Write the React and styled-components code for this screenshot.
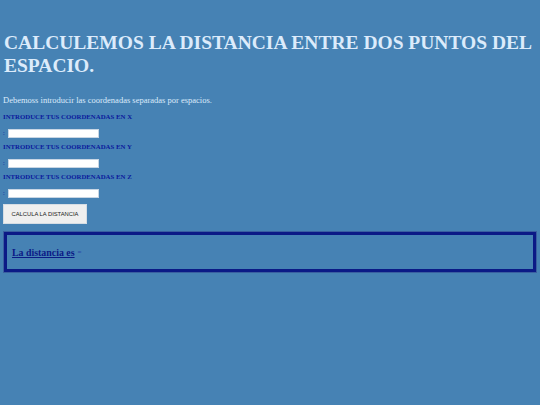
import React, { useState } from "react";
import styled, { createGlobalStyle } from "styled-components";

const GlobalStyle = createGlobalStyle`
  html, body {
    margin: 0;
    padding: 0;
    background: #4682b4;
  }
  body {
    font-family: "Liberation Serif", "Times New Roman", serif;
  }
`;

const Page = styled.main`
  padding: 0 4px;
  min-height: 405px;
  box-sizing: border-box;
  background: #4682b4;
  display: flex;
  flex-direction: column;
`;

const Title = styled.h1`
  margin: 31px 0 0;
  font-family: "Liberation Serif", "Times New Roman", serif;
  font-size: 19.5px;
  line-height: 23px;
  font-weight: bold;
  color: #dcebfb;
`;

const Intro = styled.p`
  margin: 17px 0 0 -1px;
  font-size: 8.5px;
  line-height: 12px;
  color: #dcebfb;
`;

const Field = styled.div`
  display: flex;
  flex-direction: column;
  margin-top: ${(p) => p.$top}px;
`;

const Label = styled.label`
  margin-left: -1px;
  font-size: 6.8px;
  line-height: 10px;
  font-weight: bold;
  color: #0a1a9c;
`;

const InputRow = styled.div`
  display: flex;
  align-items: center;
  height: 10px;
  margin-top: 6px;
  margin-left: -1px;
  font-size: 6px;
  color: #0a1a9c;
`;

const Input = styled.input`
  width: 91px;
  height: 9px;
  margin-left: 3px;
  padding: 0;
  border: 1px solid #c8d6e4;
  background: #ffffff;
  box-sizing: border-box;
  font-size: 6px;
`;

const Button = styled.button`
  align-self: flex-start;
  margin: 6px 0 0 -1px;
  width: 84px;
  height: 20px;
  padding: 0;
  border: 1px solid #d6dde4;
  background: #efefef;
  font-family: "Liberation Sans", Arial, sans-serif;
  font-size: 5.8px;
  color: #222;
  text-transform: uppercase;
  cursor: pointer;
`;

const Result = styled.section`
  margin-top: 8px;
  height: 40px;
  box-sizing: border-box;
  border: 3px solid #0b1a86;
  outline: 1px solid #3a5fa0;
  display: flex;
  align-items: center;
  padding-left: 5px;
  gap: 3px;
`;

const ResultLink = styled.a`
  font-size: 9.9px;
  font-weight: bold;
  color: #0b1a86;
  text-decoration: underline;
`;

const Equals = styled.span`
  font-size: 7px;
  font-weight: bold;
  color: #2a4aa8;
`;

const axes = ["X", "Y", "Z"];

export default function App() {
  const [values, setValues] = useState({ X: "", Y: "", Z: "" });
  const [result, setResult] = useState("");

  const calcular = () => {
    const nums = axes.map((a) => values[a].trim().split(/\s+/).map(Number));
    if (nums.every((n) => n.length === 2 && n.every((v) => !isNaN(v)))) {
      const d = Math.sqrt(nums.reduce((s, [a, b]) => s + (b - a) ** 2, 0));
      setResult(d.toFixed(2));
    }
  };

  return (
    <>
      <GlobalStyle />
      <Page>
        <Title>CALCULEMOS LA DISTANCIA ENTRE DOS PUNTOS DEL ESPACIO.</Title>
        <Intro>Debemoss introducir las coordenadas separadas por espacios.</Intro>
        {axes.map((a, i) => (
          <Field key={a} $top={i === 0 ? 6 : 4}>
            <Label htmlFor={`coord-${a}`}>INTRODUCE TUS COORDENADAS EN {a}</Label>
            <InputRow>
              :
              <Input
                id={`coord-${a}`}
                value={values[a]}
                onChange={(e) => setValues({ ...values, [a]: e.target.value })}
              />
            </InputRow>
          </Field>
        ))}
        <Button onClick={calcular}>Calcula la distancia</Button>
        <Result>
          <ResultLink href="#">La distancia es</ResultLink>
          <Equals>= {result}</Equals>
        </Result>
      </Page>
    </>
  );
}
